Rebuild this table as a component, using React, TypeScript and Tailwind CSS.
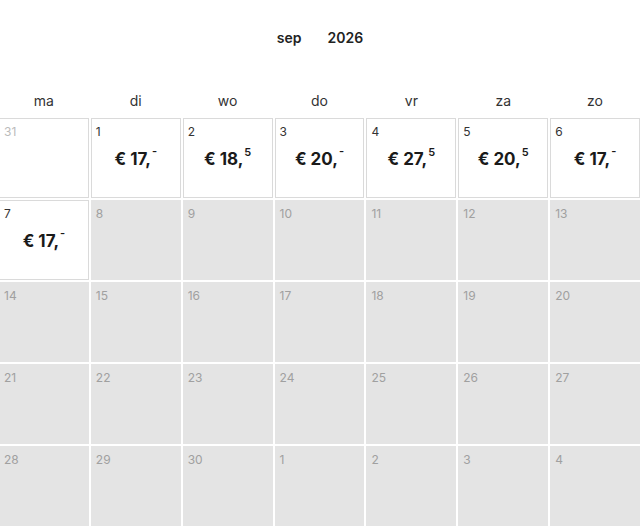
import React from "react";

type Cell = { d: string; price?: [string, string]; white?: boolean; faded?: boolean };

const rows: Cell[][] = [
  [
    { d: "31", white: true, faded: true },
    { d: "1", white: true, price: ["17,", "-"] },
    { d: "2", white: true, price: ["18,", "5"] },
    { d: "3", white: true, price: ["20,", "-"] },
    { d: "4", white: true, price: ["27,", "5"] },
    { d: "5", white: true, price: ["20,", "5"] },
    { d: "6", white: true, price: ["17,", "-"] },
  ],
  [
    { d: "7", white: true, price: ["17,", "-"] },
    { d: "8" }, { d: "9" }, { d: "10" }, { d: "11" }, { d: "12" }, { d: "13" },
  ],
  [{ d: "14" }, { d: "15" }, { d: "16" }, { d: "17" }, { d: "18" }, { d: "19" }, { d: "20" }],
  [{ d: "21" }, { d: "22" }, { d: "23" }, { d: "24" }, { d: "25" }, { d: "26" }, { d: "27" }],
  [{ d: "28" }, { d: "29" }, { d: "30" }, { d: "1" }, { d: "2" }, { d: "3" }, { d: "4" }],
];

const days = ["ma", "di", "wo", "do", "vr", "za", "zo"];

export default function App() {
  return (
    <div className="w-[640px] overflow-hidden bg-white text-[#222]" style={{ fontFamily: "Inter, 'Liberation Sans', sans-serif" }}>
      <div className="flex justify-center gap-[26px] pt-[29px] h-[86px] text-[14px] leading-[18px] font-semibold">
        <span>sep</span>
        <span>2026</span>
      </div>
      <div className="grid grid-cols-7 gap-x-[2px] w-[641px] -ml-[1px] h-[30px] text-[14px] leading-[30px] text-center text-[#333]">
        {days.map((d) => (
          <div key={d}>{d}</div>
        ))}
      </div>
      <div className="grid grid-cols-7 gap-[2px] pt-[2px] w-[641px] -ml-[1px]">
        {rows.flat().map((c, i) => (
          <div
            key={i}
            className={
              "h-[80px] border flex flex-col " +
              (c.white ? "bg-white border-[#dadada]" : "bg-[#e4e4e4] border-[#e4e4e4]")
            }
          >
            <div
              className={
                "pl-[4px] pt-[5px] text-[12px] leading-[16px] " +
                (c.white && !c.faded ? "text-[#333]" : c.faded ? "text-[#bbb]" : "text-[#a0a0a0]")
              }
            >
              {c.d}
            </div>
            {c.price && (
              <div className="flex justify-center pt-[9px] text-[17px] leading-[20px] font-bold text-[#1a1a1a]">
                <span>€ {c.price[0]}</span>
                {c.price[1] === "5" ? (
                  <span className="text-[11px] leading-[11px] font-semibold -mt-[2px] ml-[1px]">5</span>
                ) : (
                  <span className="text-[11px] leading-[11px] font-semibold -mt-[3px] ml-[1px]">-</span>
                )}
              </div>
            )}
          </div>
        ))}
      </div>
    </div>
  );
}
